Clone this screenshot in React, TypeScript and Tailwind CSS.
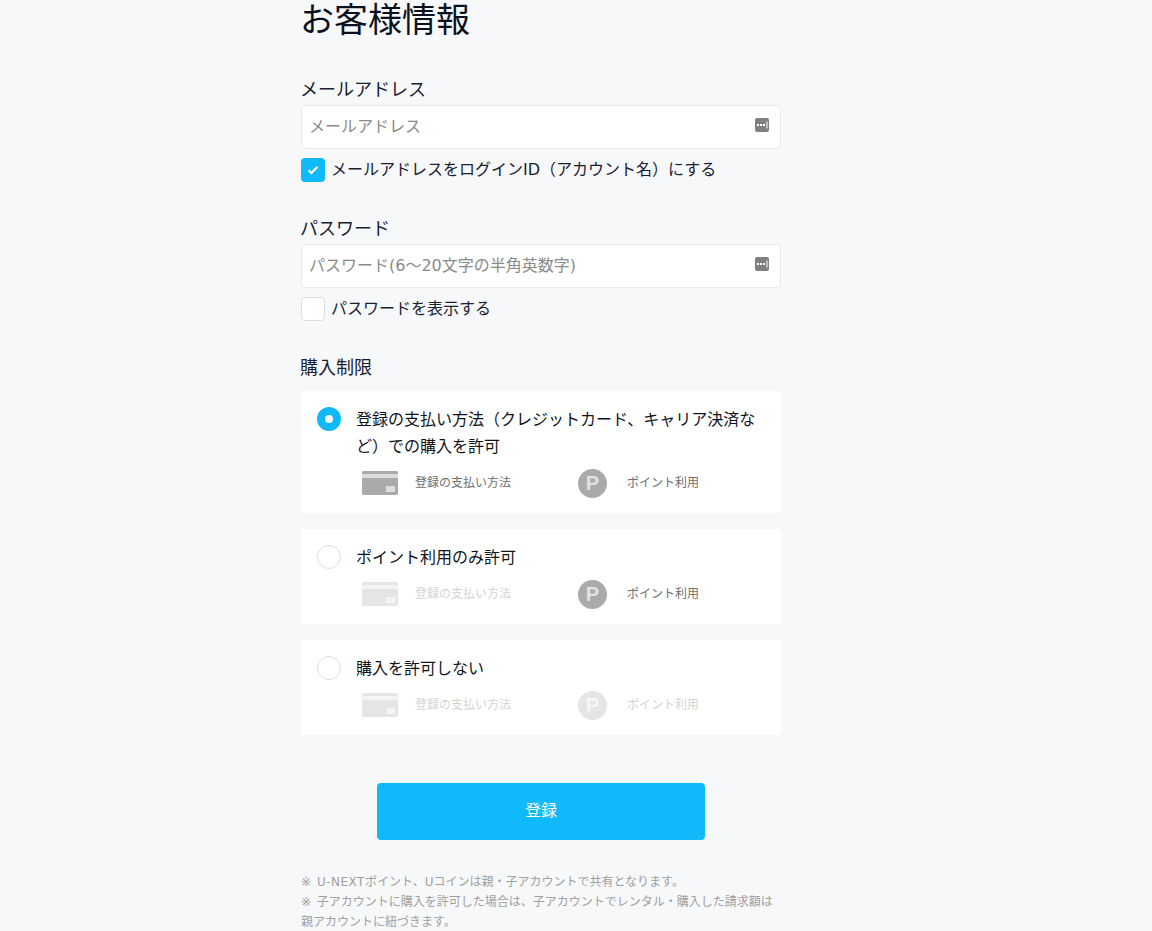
import React from "react";

const font = { fontFamily: '"DejaVu Sans", "Noto Sans CJK JP", sans-serif' };

function DotsIcon() {
  return (
    <svg width="14" height="14" viewBox="0 0 14 14" className="absolute right-3 top-[13px]">
      <rect width="14" height="14" rx="2" fill="#808080" />
      <rect x="2" y="6" width="2" height="2" fill="#fff" />
      <rect x="5" y="6" width="2" height="2" fill="#fff" />
      <rect x="8" y="6" width="2" height="2" fill="#fff" />
      <rect x="11.5" y="3.5" width="1" height="7" fill="#fff" />
    </svg>
  );
}

function TextField({ placeholder }: { placeholder: string }) {
  return (
    <div className="relative h-11">
      <input
        readOnly
        placeholder={placeholder}
        className="h-11 w-full rounded border border-[#e6e8ec] bg-white px-[7px] pb-[2px] text-base text-[#111] outline-none placeholder:text-[#8a8a8a]"
      />
      <DotsIcon />
    </div>
  );
}

function Check({ checked, label }: { checked: boolean; label: string }) {
  return (
    <div className="mt-[9px] flex h-6 items-center gap-1.5 text-base leading-6 text-[#1a2030]">
      {checked ? (
        <span className="flex h-6 w-6 items-center justify-center rounded bg-[#0fb9fa]">
          <svg width="12" height="10" viewBox="0 0 12 10" fill="none">
            <path d="M1.5 5.2 4.5 8 10.5 1.8" stroke="#fff" strokeWidth="2" />
          </svg>
        </span>
      ) : (
        <span className="h-6 w-6 rounded border border-[#dcdee2] bg-white" />
      )}
      <span>{label}</span>
    </div>
  );
}

function CardIcon() {
  return (
    <svg width="36" height="24" viewBox="0 0 36 24">
      <rect width="36" height="24" rx="1.5" fill="#aaaaaa" />
      <rect y="3" width="36" height="4" fill="#dddddd" />
      <rect x="24" y="15" width="9" height="6" fill="#dddddd" />
    </svg>
  );
}

function Option({
  label,
  selected,
  cardOn,
  pointOn,
}: {
  label: React.ReactNode;
  selected: boolean;
  cardOn: boolean;
  pointOn: boolean;
}) {
  return (
    <div className="rounded bg-white px-4 pb-4 pt-[14px]">
      <div className="flex gap-[15px]">
        {selected ? (
          <span className="mt-[2px] flex h-6 w-6 shrink-0 items-center justify-center rounded-full bg-[#0fb9fa]">
            <span className="h-2 w-2 rounded-full bg-white" />
          </span>
        ) : (
          <span className="mt-[2px] h-6 w-6 shrink-0 rounded-full border border-[#dddddd] bg-white" />
        )}
        <div className="pt-px text-base leading-[27px] text-[#10131c]">{label}</div>
      </div>
      <div className="mt-[9px] flex h-7 items-center pl-[45px] text-xs text-[#6e6e6e]">
        <div className={`flex w-[216px] items-center ${cardOn ? "" : "opacity-30"}`}>
          <CardIcon />
          <span className="ml-[17px]">登録の支払い方法</span>
        </div>
        <div className={`flex items-center ${pointOn ? "" : "opacity-30"}`}>
          <span
            className="flex h-[29px] w-[29px] items-center justify-center rounded-full bg-[#aaaaaa] text-[20px] font-bold leading-none text-[#e2e2e2]"
            style={{ fontFamily: '"Liberation Sans", sans-serif' }}
          >
            P
          </span>
          <span className="ml-5">ポイント利用</span>
        </div>
      </div>
    </div>
  );
}

export default function App() {
  return (
    <div className="h-[931px] overflow-hidden bg-[#f7f8fa]" style={font}>
      <div className="ml-[301px] w-[480px]">
        <h1 className="-ml-px h-[38px] text-[34px] font-normal leading-[41px] text-[#0b1020]">お客様情報</h1>

        <div className="-ml-px mb-1 mt-[39px] h-6 text-lg leading-[25px] text-[#1a2030]">メールアドレス</div>
        <TextField placeholder="メールアドレス" />
        <Check checked label="メールアドレスをログインID（アカウント名）にする" />

        <div className="-ml-px mb-1 mt-[34px] h-6 text-lg leading-[25px] text-[#1a2030]">パスワード</div>
        <TextField placeholder="パスワード(6〜20文字の半角英数字)" />
        <Check checked={false} label="パスワードを表示する" />

        <div className="-ml-px mb-3 mt-[34px] h-6 text-lg leading-[25px] text-[#1a2030]">購入制限</div>
        <div className="flex flex-col gap-4">
          <Option
            selected
            cardOn
            pointOn
            label="登録の支払い方法（クレジットカード、キャリア決済など）での購入を許可"
          />
          <Option selected={false} cardOn={false} pointOn label="ポイント利用のみ許可" />
          <Option selected={false} cardOn={false} pointOn={false} label="購入を許可しない" />
        </div>

        <button className="mx-auto mt-12 block h-[57px] w-[328px] rounded bg-[#0fb9fa] pb-[2px] text-base text-white">
          登録
        </button>

        <div className="mt-8 text-xs leading-5 text-[#a0a0a0] [word-spacing:2px]">
          <p>
            ※ <span className="tracking-[0.5px]">U-NEXT</span>ポイント、Uコインは親・子アカウントで共有となります。
          </p>
          <p>※ 子アカウントに購入を許可した場合は、子アカウントでレンタル・購入した請求額は親アカウントに紐づきます。</p>
        </div>
      </div>
    </div>
  );
}
